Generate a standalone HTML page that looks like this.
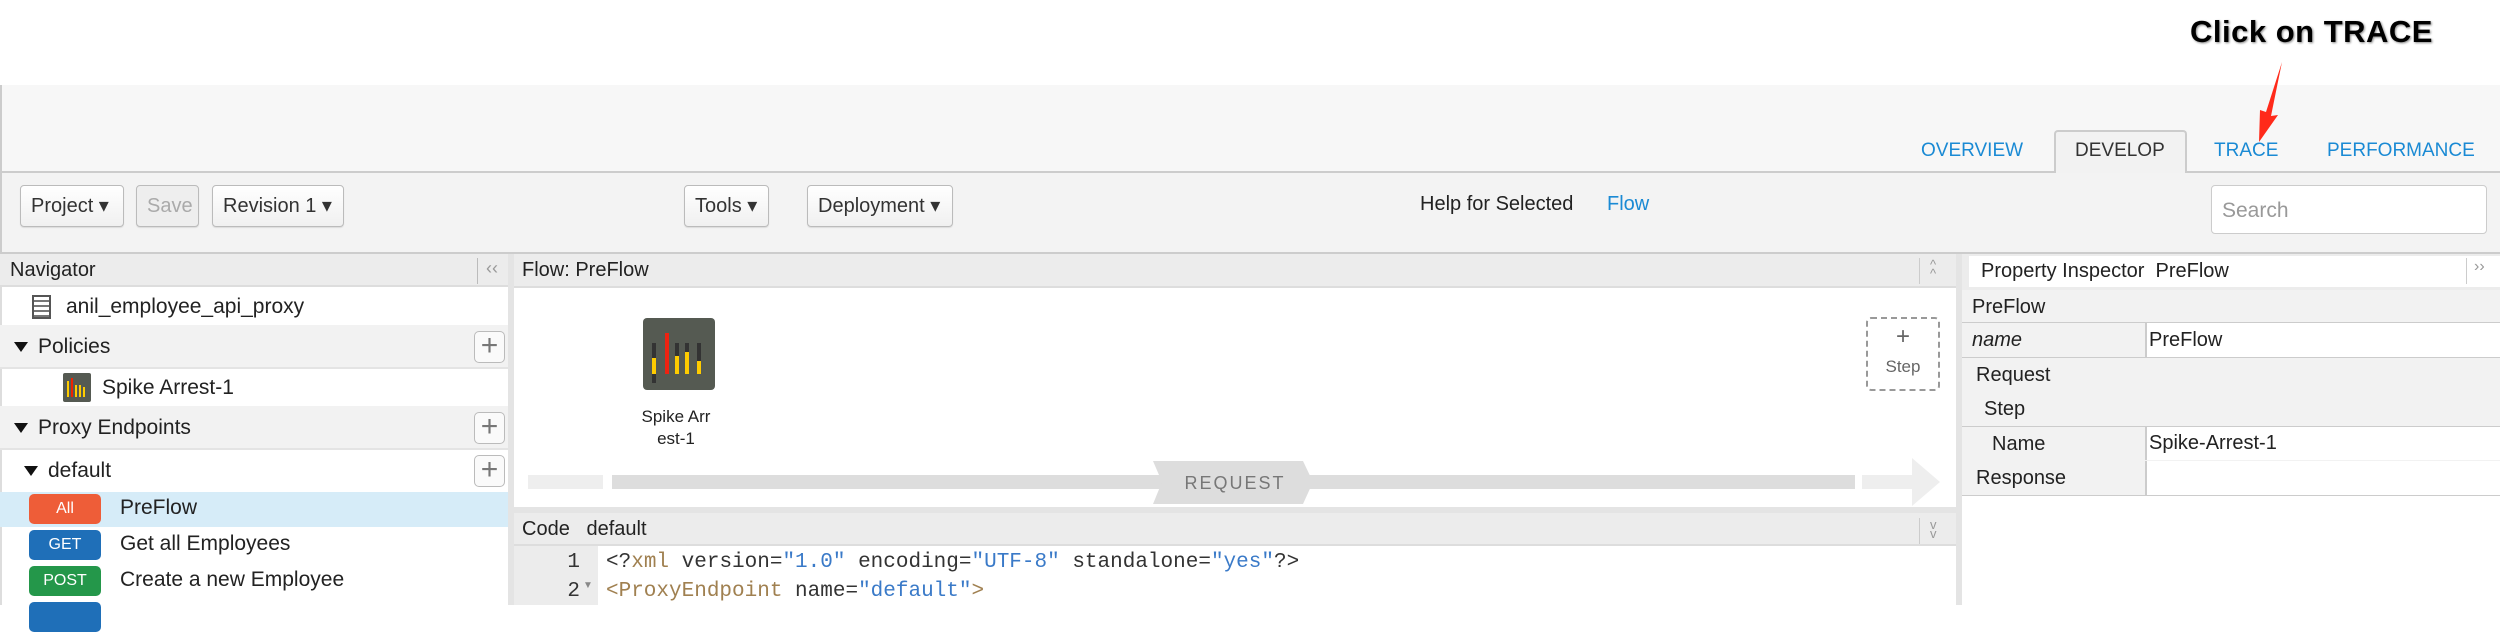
<!DOCTYPE html>
<html><head><meta charset="utf-8"><style>
*{box-sizing:border-box;margin:0;padding:0}
body{width:2500px;height:605px;overflow:hidden;background:#fff;font-family:"Liberation Sans",sans-serif;color:#222;position:relative}
.a{position:absolute}
.btn{position:absolute;top:185px;height:42px;border:1px solid #bbb;border-radius:4px;background:linear-gradient(#fff,#f0f0f0);font-size:20px;line-height:40px;padding-left:10px;color:#333;box-shadow:0 1px 1px rgba(0,0,0,.1)}
.tab{position:absolute;top:140px;font-size:19px;color:#1a8ad4}
.row{position:absolute;left:0;width:508px;font-size:21px}
.plus{position:absolute;left:474px;width:31px;height:32px;border:1px solid #bbb;border-radius:5px;background:#fafafa;color:#777;font-size:30px;line-height:28px;text-align:center}
.tri{display:inline-block;width:0;height:0;border-left:7px solid transparent;border-right:7px solid transparent;border-top:10px solid #111;margin-right:10px;vertical-align:middle}
.badge{position:absolute;left:29px;width:72px;height:30px;border-radius:5px;color:#fff;font-size:16px;text-align:center;line-height:30px}
.pr{position:absolute;left:1962px;width:538px;height:35px;border-bottom:1px solid #ccc;font-size:20px;line-height:34px}
.code{font-family:"Liberation Mono",monospace;font-size:21px}
</style></head><body>
<div class="a" style="left:0;top:85px;width:2500px;height:87px;background:#f7f7f7;border-left:2px solid #ccc"></div>
<div class="a" style="left:0;top:171px;width:2500px;height:2px;background:#ccc"></div>
<div class="a" style="left:2054px;top:130px;width:133px;height:43px;background:#f2f2f2;border:2px solid #ccc;border-bottom:none;border-radius:4px 4px 0 0"></div>
<div class="tab" style="left:1921px">OVERVIEW</div>
<div class="tab" style="left:2075px;color:#333">DEVELOP</div>
<div class="tab" style="left:2214px">TRACE</div>
<div class="tab" style="left:2327px">PERFORMANCE</div>
<div class="a" style="left:2190px;top:14px;font-size:31px;font-weight:bold;color:#000;letter-spacing:0.5px;text-shadow:1px 1px 2px #888">Click on TRACE</div>
<svg class="a" style="left:2240px;top:58px" width="60" height="90"><path d="M42 4 L31 58 L38 57 L19 84 L20 52 L26 54 Z" fill="#ff2a1a"/></svg>
<div class="a" style="left:0;top:173px;width:2500px;height:81px;background:#f3f3f3;border-left:2px solid #ccc"></div>
<div class="a" style="left:0;top:252px;width:2500px;height:2px;background:#ccc"></div>
<div class="btn" style="left:20px;width:104px">Project ▾</div>
<div class="btn" style="left:136px;width:63px;color:#aaa;background:#eee">Save</div>
<div class="btn" style="left:212px;width:132px">Revision 1 ▾</div>
<div class="btn" style="left:684px;width:85px">Tools ▾</div>
<div class="btn" style="left:807px;width:146px">Deployment ▾</div>
<div class="a" style="left:1420px;top:193px;font-size:20px">Help for Selected</div>
<div class="a" style="left:1607px;top:193px;font-size:20px;color:#1a8ad4">Flow</div>
<div class="a" style="left:2211px;top:185px;width:276px;height:49px;background:#fff;border:1px solid #ccc;border-radius:4px;font-size:21px;color:#999;padding:13px 0 0 10px">Search</div>
<div class="a" style="left:0;top:254px;width:508px;height:351px;background:#fff;border-left:2px solid #ddd"></div>
<div class="a" style="left:0;top:254px;width:508px;height:33px;background:#ececec;border-bottom:2px solid #ddd;font-size:20px;line-height:32px;padding-left:10px">Navigator</div>
<div class="a" style="left:477px;top:258px;width:1px;height:26px;background:#bbb"></div>
<div class="a" style="left:486px;top:258px;font-size:18px;color:#999">‹‹</div>
<div class="row" style="top:288px;height:37px;line-height:37px;padding-left:66px">anil_employee_api_proxy</div>
<div class="a" style="left:32px;top:295px;width:19px;height:24px;border:2px solid #555;background:repeating-linear-gradient(#fff 0 3px,#777 3px 5px)"></div>
<div class="row" style="top:325px;height:44px;line-height:44px;background:#f2f2f2;border-bottom:2px solid #e4e4e4;padding-left:14px"><span class="tri"></span>Policies</div>
<div class="plus" style="top:331px">+</div>
<div class="row" style="top:369px;height:37px;line-height:37px;padding-left:102px">Spike Arrest-1</div>
<svg class="a" style="left:63px;top:373px" width="28" height="29"><rect width="28" height="29" rx="2" fill="#555a52"/><rect x="4" y="8" width="2" height="16" fill="#fc0"/><rect x="8" y="5" width="2" height="19" fill="#e20"/><rect x="12" y="12" width="2" height="12" fill="#fc0"/><rect x="16" y="12" width="2" height="12" fill="#fc0"/><rect x="20" y="14" width="2" height="10" fill="#fc0"/></svg>
<div class="row" style="top:406px;height:44px;line-height:44px;background:#f2f2f2;border-bottom:2px solid #e4e4e4;padding-left:14px"><span class="tri"></span>Proxy Endpoints</div>
<div class="plus" style="top:412px">+</div>
<div class="row" style="top:450px;height:42px;line-height:42px;padding-left:24px"><span class="tri"></span>default</div>
<div class="plus" style="top:455px">+</div>
<div class="row" style="top:492px;height:35px;background:#d6ecf8"></div>
<div class="badge" style="top:494px;background:#ee5d38">All</div><div class="a" style="left:120px;top:496px;font-size:21px">PreFlow</div>
<div class="badge" style="top:530px;background:#1f6fb8">GET</div><div class="a" style="left:120px;top:532px;font-size:21px">Get all Employees</div>
<div class="badge" style="top:566px;background:#24974a">POST</div><div class="a" style="left:120px;top:568px;font-size:21px">Create a new Employee</div>
<div class="badge" style="top:602px;background:#1f6fb8"></div>
<div class="a" style="left:508px;top:254px;width:6px;height:351px;background:#e4e4e4"></div>
<div class="a" style="left:514px;top:254px;width:1442px;height:34px;background:#ececec;border-bottom:2px solid #ddd;font-size:20px;line-height:32px;padding-left:8px">Flow: PreFlow</div>
<div class="a" style="left:1919px;top:258px;width:1px;height:26px;background:#ccc"></div>
<div class="a" style="left:1930px;top:260px;font-size:13px;color:#999;line-height:9px">^<br>^</div>
<svg class="a" style="left:643px;top:318px" width="72" height="72"><rect width="72" height="72" rx="4" fill="#555a52"/><rect x="9" y="25" width="4" height="40" fill="#333"/><rect x="9" y="40" width="4" height="16" fill="#fc0"/><rect x="22" y="15" width="4" height="41" fill="#e21"/><rect x="32" y="25" width="4" height="31" fill="#333"/><rect x="32" y="38" width="4" height="18" fill="#fc0"/><rect x="42" y="25" width="4" height="31" fill="#333"/><rect x="42" y="34" width="4" height="22" fill="#fc0"/><rect x="54" y="25" width="4" height="31" fill="#333"/><rect x="54" y="43" width="4" height="13" fill="#fc0"/></svg>
<div class="a" style="left:620px;top:406px;width:112px;text-align:center;font-size:17px;line-height:22px">Spike Arr<br>est-1</div>
<div class="a" style="left:1866px;top:317px;width:74px;height:74px;border:2px dashed #999;border-radius:5px;text-align:center;color:#666"><div style="font-size:24px;margin-top:4px">+</div><div style="font-size:17px;margin-top:6px">Step</div></div>
<div class="a" style="left:528px;top:475px;width:75px;height:14px;background:#eee"></div>
<div class="a" style="left:612px;top:475px;width:1243px;height:14px;background:#ddd"></div>
<svg class="a" style="left:1150px;top:460px" width="170" height="46"><path d="M3 1 H153 L163 22 L153 44 H3 L12 22 Z" fill="#ddd"/><text x="85" y="29" text-anchor="middle" font-family="Liberation Sans" font-size="18" letter-spacing="2" fill="#777">REQUEST</text></svg>
<svg class="a" style="left:1862px;top:458px" width="80" height="48"><path d="M0 17 H50 V0 L78 24 L50 48 V31 H0 Z" fill="#eee"/></svg>
<div class="a" style="left:514px;top:507px;width:1442px;height:6px;background:#e4e4e4"></div>
<div class="a" style="left:514px;top:513px;width:1442px;height:33px;background:#ececec;border-bottom:2px solid #ddd;font-size:20px;line-height:32px;padding-left:8px">Code&nbsp;&nbsp; default</div>
<div class="a" style="left:1919px;top:518px;width:1px;height:26px;background:#ccc"></div>
<div class="a" style="left:1930px;top:520px;font-size:13px;color:#999;line-height:9px">v<br>v</div>
<div class="a" style="left:514px;top:546px;width:84px;height:59px;background:#ececec"></div>
<div class="a code" style="left:540px;top:548px;width:40px;text-align:right;line-height:29px;color:#333">1<br>2</div>
<div class="a" style="left:583px;top:580px;font-size:10px;color:#888">▼</div>
<div class="a code" style="left:606px;top:548px;line-height:29px;white-space:pre;color:#333">&lt;?<span style="color:#a08050">xml</span> version=<span style="color:#3a7ac8">"1.0"</span> encoding=<span style="color:#3a7ac8">"UTF-8"</span> standalone=<span style="color:#3a7ac8">"yes"</span>?&gt;
<span style="color:#a08050">&lt;ProxyEndpoint</span> name=<span style="color:#3a7ac8">"default"</span><span style="color:#a08050">&gt;</span></div>
<div class="a" style="left:1956px;top:254px;width:6px;height:351px;background:#e4e4e4"></div>
<div class="a" style="left:1962px;top:254px;width:538px;height:36px;background:#ececec"></div>
<div class="a" style="left:1969px;top:256px;width:531px;height:31px;background:#fff;font-size:20px;line-height:31px;padding-left:12px">Property Inspector&nbsp; PreFlow</div>
<div class="a" style="left:2466px;top:258px;width:1px;height:26px;background:#ccc"></div>
<div class="a" style="left:2474px;top:258px;font-size:16px;color:#999">››</div>
<div class="pr" style="top:290px;background:#f2f2f2;padding-left:10px;height:33px">PreFlow</div>
<div class="pr" style="top:323px;background:#f2f2f2;padding-left:10px;font-style:italic">name</div>
<div class="pr" style="top:358px;background:#f2f2f2;padding-left:14px">Request</div>
<div class="pr" style="top:392px;background:#f2f2f2;padding-left:22px">Step</div>
<div class="pr" style="top:427px;background:#f2f2f2;padding-left:30px">Name</div>
<div class="pr" style="top:461px;background:#f2f2f2;padding-left:14px">Response</div>
<div class="a" style="left:2145px;top:323px;width:355px;height:34px;background:#fff;border-left:2px solid #ccc;font-size:20px;line-height:34px;padding-left:2px">PreFlow</div>
<div class="a" style="left:2145px;top:427px;width:355px;height:33px;background:#fff;border-left:2px solid #ccc;font-size:20px;line-height:33px;padding-left:2px">Spike-Arrest-1</div>
<div class="a" style="left:2145px;top:461px;width:355px;height:34px;background:#fff;border-left:2px solid #ccc"></div>
</body></html>
